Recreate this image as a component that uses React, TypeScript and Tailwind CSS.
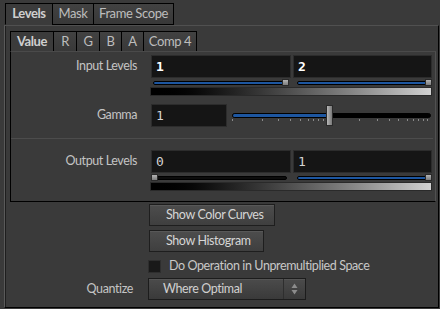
import React from 'react';

const GAMMA_TICKS = [0, 30, 46, 58, 68, 76, 81, 86, 91, 94, 127, 145, 157, 166, 175, 181, 186, 191, 195];

const Handle: React.FC<{ className?: string }> = ({ className = '' }) => (
  <div
    className={`absolute w-[7px] h-[7px] border border-[#2a2a2a] bg-gradient-to-b from-[#b4b4b4] to-[#7c7c7c] ${className}`}
  />
);

const LevelSlider: React.FC<{ blue: boolean; handle: 'left' | 'right' }> = ({ blue, handle }) => (
  <div className="relative flex-1 h-[7px] flex items-center px-[2px]">
    <div
      className={`w-full h-[4px] rounded-full border border-black ${blue ? 'bg-[#1d56a0]' : 'bg-[#0c0c0c]'}`}
    />
    <Handle className={handle === 'right' ? 'right-0 top-0' : 'left-0 top-0'} />
  </div>
);

const Field: React.FC<{ value: string; bold?: boolean; className?: string }> = ({ value, bold, className = '' }) => (
  <div
    className={`h-[23px] bg-[#151515] border border-[#2c2c2c] flex items-center pl-[4px] text-[13px] tracking-normal font-[family-name:'DejaVu_Sans_Mono',monospace] ${
      bold ? 'font-bold text-white' : 'text-[#d4d4d4]'
    } ${className}`}
  >
    {value}
  </div>
);

const Gradient: React.FC = () => (
  <div className="h-[9px] w-[282px] border border-[#2a2a2a] bg-gradient-to-r from-black to-[#d2d2d2]" />
);

const OuterTab: React.FC<{ label: string; active?: boolean; w: string }> = ({ label, active, w }) => (
  <div
    className={`${w} h-[22px] -ml-px first:ml-0 flex items-center justify-center border border-black text-[13px] ${
      active
        ? 'border-b-transparent bg-[#3b3b3b] font-bold text-[#cfcfcf]'
        : 'bg-gradient-to-b from-[#424242] to-[#383838] text-[#bdbdbd]'
    }`}
  >
    {label}
  </div>
);

const InnerTab: React.FC<{ label: string; active?: boolean; w: string }> = ({ label, active, w }) => (
  <div
    className={`${w} h-[21px] -ml-px first:ml-0 flex items-center justify-center border border-black text-[13px] ${
      active
        ? 'border-b-transparent bg-[#3b3b3b] font-bold text-[#cfcfcf]'
        : 'bg-gradient-to-b from-[#424242] to-[#383838] text-[#bdbdbd]'
    }`}
  >
    {label}
  </div>
);

const Button: React.FC<{ label: string; w: string }> = ({ label, w }) => (
  <div
    className={`${w} h-[22px] flex items-center pl-[16px] whitespace-nowrap border border-[#1e1e1e] bg-gradient-to-b from-[#4d4d4d] to-[#3f3f3f] text-[#d6d6d6] shadow-[inset_0_1px_0_#585858]`}
  >
    {label}
  </div>
);

export default function App() {
  return (
    <div className="w-[440px] h-[309px] bg-[#3a3a3a] overflow-hidden flex flex-col text-[12.5px] tracking-[-0.4px] text-[#c4c4c4] font-[family-name:Lato,'Liberation_Sans',sans-serif]">
      {/* top tabs */}
      <div className="flex items-end h-[25px] pl-[5px]">
        <OuterTab label="Levels" active w="w-[48px]" />
        <OuterTab label="Mask" w="w-[42px]" />
        <OuterTab label="Frame Scope" w="w-[81px]" />
      </div>

      {/* main panel */}
      <div className="flex-1 ml-[4px] mr-[1px] mb-[1px] border-t border-t-[#505050] border-l border-l-[#5a5a5a] border-r border-r-black border-b border-b-black shadow-[inset_1px_0_0_#1e1e1e] pl-[5px] pr-[2px] pt-[5px] flex flex-col">
        <div className="flex">
          <InnerTab label="Value" active w="w-[44px]" />
          <InnerTab label="R" w="w-[24px]" />
          <InnerTab label="G" w="w-[24px]" />
          <InnerTab label="B" w="w-[23px]" />
          <InnerTab label="A" w="w-[23px]" />
          <InnerTab label="Comp 4" w="w-[54px]" />
        </div>

        {/* inner value panel */}
        <div className="h-[151px] -mt-px border-l border-l-black border-b border-b-black border-t border-t-[#4a4a4a] border-r border-r-[#505050] flex flex-col pt-[3px]">
          {/* Input Levels */}
          <div className="flex">
            <div className="w-[126px] h-[23px] flex items-center justify-end">Input Levels</div>
            <div className="ml-[13px] w-[282px] flex flex-col">
              <div className="flex gap-[2px] pl-[1px]">
                <Field value="1" bold className="w-[140px]" />
                <Field value="2" bold className="flex-1" />
              </div>
              <div className="flex gap-[6px] mt-[1px] pl-[1px]">
                <LevelSlider blue handle="right" />
                <LevelSlider blue handle="right" />
              </div>
              <div className="mt-[1px]">
                <Gradient />
              </div>
            </div>
          </div>

          {/* Gamma */}
          <div className="flex mt-[8px]">
            <div className="w-[126px] h-[23px] flex items-center justify-end">Gamma</div>
            <div className="ml-[13px] w-[282px] flex items-start">
              <Field value="1" className="w-[76px] ml-[1px]" />
              <div className="relative ml-[5px] w-[199px] h-[23px]">
                <div className="absolute left-0 right-0 top-[9px] h-[5px] rounded-full border border-black bg-black overflow-hidden">
                  <div className="h-full w-[96px] bg-[#1d56a0]" />
                </div>
                <svg className="absolute left-0 top-[15px]" width="199" height="3">
                  {GAMMA_TICKS.map((x) => (
                    <rect key={x} x={x} y={0} width={1} height={2} fill="#8a8a8a" />
                  ))}
                </svg>
                <div className="absolute left-[94px] top-[1px] w-[7px] h-[21px] border border-[#2a2a2a] bg-gradient-to-r from-[#b8b8b8] to-[#7a7a7a]" />
              </div>
            </div>
          </div>

          <div className="mt-[11px] mr-[2px] h-px bg-[#4c4c4c]" />

          {/* Output Levels */}
          <div className="flex mt-[11px]">
            <div className="w-[126px] h-[23px] flex items-center justify-end">Output Levels</div>
            <div className="ml-[13px] w-[282px] flex flex-col">
              <div className="flex gap-[2px] pl-[1px]">
                <Field value="0" className="w-[140px]" />
                <Field value="1" className="flex-1" />
              </div>
              <div className="flex gap-[6px] mt-[1px] pl-[1px]">
                <LevelSlider blue={false} handle="left" />
                <LevelSlider blue handle="right" />
              </div>
              <div className="mt-[1px]">
                <Gradient />
              </div>
            </div>
          </div>
        </div>

        {/* lower controls */}
        <div className="pl-[139px] flex flex-col">
          <div className="mt-[2px]">
            <Button label="Show Color Curves" w="w-[126px]" />
          </div>
          <div className="mt-[4px]">
            <Button label="Show Histogram" w="w-[115px]" />
          </div>
          <div className="mt-[7px] flex items-center h-[14px]">
            <div className="w-[13px] h-[13px] bg-[#191919] border border-[#2e2e2e] -ml-px" />
            <span className="ml-[8px] text-[#c8c8c8]">Do Operation in Unpremultiplied Space</span>
          </div>
        </div>
        <div className="flex mt-[5px] items-center">
          <div className="w-[123px] flex justify-end">Quantize</div>
          <div className="ml-[15px] w-[158px] h-[22px] flex border border-[#1c1c1c] bg-gradient-to-b from-[#4b4b4b] to-[#3a3a3a] shadow-[inset_0_1px_0_#555]">
            <div className="flex-1 flex items-center pl-[14px] text-[#d0d0d0]">Where Optimal</div>
            <div className="w-[22px] border-l border-[#2e2e2e] flex items-center justify-center">
              <svg width="7" height="12" viewBox="0 0 7 12">
                <path d="M3.5 0.5 L6.5 5 L0.5 5 Z" fill="#8c8c8c" />
                <path d="M3.5 11.5 L6.5 7 L0.5 7 Z" fill="#8c8c8c" />
              </svg>
            </div>
          </div>
        </div>
      </div>
    </div>
  );
}
